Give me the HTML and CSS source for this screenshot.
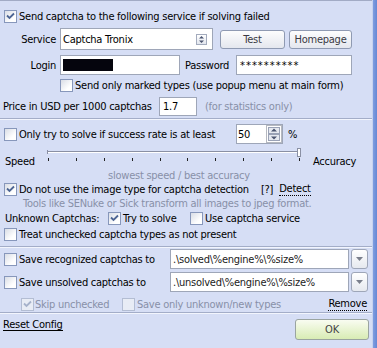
FILE: index.html
```html
<!DOCTYPE html>
<html lang="en">
<head>
  <meta charset="UTF-8" />
  <title>Captcha Settings</title>
  <link rel="stylesheet" href="styles.css">
</head>
<body>

<div class="window">
  <div class="panel">

    <div class="row r1">
      <span class="cb"><svg class="tick" viewBox="0 0 11 11"><path d="M2 4.5l2.5 2.5L9 2.5"/></svg></span>
      <span class="cap">Send captcha to the following service if solving failed</span>
    </div>

    <div class="row r2">
      <span class="lbl">Service</span>
      <div class="select">
        <span class="select-text">Captcha Tronix</span>
        <span class="select-btn">
          <svg width="7" height="9" viewBox="0 0 7 9"><path d="M3.5 1L6 3.5H1z M1 5.5h5L3.5 8z" fill="#4b5570"/></svg>
        </span>
      </div>
      <button class="btn btn-test">Test</button>
      <button class="btn btn-home">Homepage</button>
    </div>

    <div class="row r3">
      <span class="lbl">Login</span>
      <div class="field login"><span class="redacted"></span></div>
      <span class="lbl-pass">Password</span>
      <div class="field password">**********</div>
    </div>

    <div class="row r4">
      <span class="cb"></span>
      <span class="cap">Send only marked types (use popup menu at main form)</span>
    </div>

    <div class="row r5">
      <span class="price-lbl">Price in USD per 1000 captchas</span>
      <div class="field price">1.7</div>
      <span class="hint">(for statistics only)</span>
    </div>

    <div class="sep sep1"></div>

    <div class="row r6">
      <span class="cb"></span>
      <span class="cap rate-lbl">Only try to solve if success rate is at least</span>
      <div class="field spin">
        <span>50</span>
        <svg class="spin-btns" width="16" height="18" viewBox="0 0 16 18">
          <rect x="0.5" y="0.5" width="15" height="17" fill="none" stroke="#6b7080" stroke-dasharray="1 1"/>
          <rect x="2.5" y="2.5" width="11" height="6" fill="#e6e9f0" stroke="#9aa2b6"/>
          <rect x="2.5" y="9.5" width="11" height="6" fill="#e6e9f0" stroke="#9aa2b6"/>
          <path d="M8 3.5l3 3H5z M5 11.5h6l-3 3z" fill="#4b5570"/>
        </svg>
      </div>
      <span class="pct">%</span>
    </div>

    <div class="row r7">
      <span class="speed">Speed</span>
      <svg class="slider" width="254" height="20" viewBox="0 0 254 20">
        <rect x="0" y="4" width="252" height="1" fill="#8a90a4"/>
        <rect x="0" y="5" width="252" height="1" fill="#ffffff"/>
        <rect x="0" y="3" width="1" height="4" fill="#8a90a4"/>
        <g fill="#222">
          <rect x="1" y="11" width="1" height="3"/>
          <rect x="29" y="11" width="1" height="3"/>
          <rect x="57" y="11" width="1" height="3"/>
          <rect x="85" y="11" width="1" height="3"/>
          <rect x="113" y="11" width="1" height="3"/>
          <rect x="140" y="11" width="1" height="3"/>
          <rect x="168" y="11" width="1" height="3"/>
          <rect x="196" y="11" width="1" height="3"/>
          <rect x="224" y="11" width="1" height="3"/>
          <rect x="252" y="11" width="1" height="3"/>
        </g>
        <rect x="250.5" y="1.5" width="3" height="8" fill="#ffffff" stroke="#8a90a4"/>
      </svg>
      <span class="accuracy">Accuracy</span>
    </div>

    <div class="row r8">
      <span class="hint slider-hint">slowest speed / best accuracy</span>
    </div>

    <div class="row r9">
      <span class="cb"><svg class="tick" viewBox="0 0 11 11"><path d="M2 4.5l2.5 2.5L9 2.5"/></svg></span>
      <span class="cap detect-lbl">Do not use the image type for captcha detection</span>
      <span>[?]</span>
      <span class="link dotted detect">Detect</span>
    </div>

    <div class="row r10">
      <span class="hint">Tools like SENuke or Sick transform all images to jpeg format.</span>
    </div>

    <div class="row r11">
      <span class="unknown-lbl">Unknown Captchas:</span>
      <span class="cb"><svg class="tick" viewBox="0 0 11 11"><path d="M2 4.5l2.5 2.5L9 2.5"/></svg></span>
      <span class="cap try-lbl">Try to solve</span>
      <span class="cb"></span>
      <span class="cap">Use captcha service</span>
    </div>

    <div class="row r12">
      <span class="cb"></span>
      <span class="cap">Treat unchecked captcha types as not present</span>
    </div>

    <div class="sep sep2"></div>

    <div class="row r13">
      <span class="cb"></span>
      <span class="cap save-lbl">Save recognized captchas to</span>
      <div class="field combo">.\solved\%engine%\%size%</div>
      <span class="drop"><svg width="7" height="4" viewBox="0 0 7 4"><path d="M0 0h7L3.5 4z" fill="#7a7f8c"/></svg></span>
    </div>

    <div class="row r14">
      <span class="cb"></span>
      <span class="cap save-lbl">Save unsolved captchas to</span>
      <div class="field combo">.\unsolved\%engine%\%size%</div>
      <span class="drop"><svg width="7" height="4" viewBox="0 0 7 4"><path d="M0 0h7L3.5 4z" fill="#7a7f8c"/></svg></span>
    </div>

    <div class="row r15">
      <span class="cb disabled"><svg class="tick" viewBox="0 0 11 11"><path d="M2 4.5l2.5 2.5L9 2.5"/></svg></span>
      <span class="cap off skip-lbl">Skip unchecked</span>
      <span class="cb disabled"></span>
      <span class="cap off">Save only unknown/new types</span>
      <span class="link dotted remove">Remove</span>
    </div>

    <div class="sep sep3"></div>

    <div class="row bottom">
      <span class="link reset">Reset Config</span>
      <button class="btn ok">OK</button>
    </div>

  </div>
  <div class="frame"></div>
</div>

</body>
</html>
```

FILE: styles.css
```css
body {
  margin: 0;
  font-family: "DejaVu Sans Condensed", "DejaVu Sans", sans-serif;
  font-size: 11px;
  line-height: 13px;
  letter-spacing: -0.25px;
  color: #000;
  background: #d6def5;
}

.window {
  display: flex;
  width: 377px;
  height: 348px;
}

.panel {
  width: 372px;
  border-top: 1px solid #a2abc5;
}

.frame {
  width: 5px;
  background: linear-gradient(to right, #c6d2ef 0, #c6d2ef 1px, #7f9de0 1px, #6788d4 100%);
}

.row {
  display: flex;
  align-items: center;
  white-space: nowrap;
}

/* checkboxes */
.cb {
  flex: none;
  width: 13px;
  height: 13px;
  box-sizing: border-box;
  border: 1px solid #8797bb;
  background: linear-gradient(135deg, #d9dde6, #ffffff 70%);
  display: flex;
  align-items: center;
  justify-content: center;
}

.tick {
  width: 11px;
  height: 11px;
}

.tick path {
  fill: none;
  stroke: #4d6594;
  stroke-width: 1.8;
}

.cb.disabled {
  border-color: #b3bdd3;
  background: #e8ecf5;
}

.cb.disabled .tick path {
  stroke: #a6b2cb;
}

.cap {
  margin-left: 2px;
}

.off,
.hint {
  color: #8890a8;
}

/* fields */
.field {
  box-sizing: border-box;
  background: #fff;
  border: 1px solid #9ea6b8;
  display: flex;
  align-items: center;
  padding-left: 2px;
}

.btn {
  font-family: inherit;
  font-size: 11px;
  letter-spacing: -0.25px;
  color: #3a3a44;
  border: 1px solid #8f9ab2;
  border-radius: 3px;
  background: linear-gradient(#fdfdfd, #e4e7ee);
  padding: 0;
}

.link {
  color: #000;
}

.dotted {
  border-bottom: 1px dotted #000;
  line-height: 12px;
}

.sep {
  border-top: 1px solid #a3adc8;
  border-bottom: 1px solid #f2f5fd;
}

/* row 1 */
.r1 {
  margin-top: 7px;
  height: 16px;
  padding-left: 4px;
}

/* service row */
.r2 {
  margin-top: 4px;
  height: 22px;
}

.lbl {
  width: 56px;
  margin-right: 4px;
  text-align: right;
}

.select {
  box-sizing: border-box;
  width: 153px;
  height: 22px;
  background: #fff;
  border: 1px solid #9ea6b8;
  display: flex;
  align-items: center;
  justify-content: space-between;
  padding: 0 5px 0 2px;
}

.select-btn {
  width: 11px;
  height: 11px;
  box-sizing: border-box;
  border: 1px solid #a3abbd;
  background: linear-gradient(#ffffff, #e2e6ee);
  display: flex;
  align-items: center;
  justify-content: center;
}

.btn-test {
  margin-left: 7px;
  width: 65px;
  height: 19px;
}

.btn-home {
  margin-left: 4px;
  width: 63px;
  height: 19px;
}

/* login row */
.r3 {
  margin-top: 5px;
  height: 20px;
}

.login {
  width: 120px;
  height: 20px;
}

.redacted {
  width: 50px;
  height: 12px;
  background: #05050d;
}

.lbl-pass {
  margin-left: 5px;
  width: 51px;
}

.password {
  width: 116px;
  height: 20px;
  padding-left: 3px;
  letter-spacing: 1px;
}

.r4 {
  margin-top: 2px;
  height: 16px;
  padding-left: 60px;
}

/* price row */
.r5 {
  margin-top: 3px;
  height: 20px;
  padding-left: 3px;
}

.price-lbl {
  width: 156px;
}

.price {
  width: 38px;
  height: 19px;
  padding-left: 3px;
}

.r5 .hint {
  margin-left: 8px;
}

.sep1 {
  margin-top: 2px;
}

/* success rate row */
.r6 {
  margin-top: 4px;
  height: 20px;
  padding-left: 4px;
}

.rate-lbl {
  width: 217px;
}

.spin {
  width: 47px;
  height: 20px;
  justify-content: space-between;
  padding: 0 0 0 1px;
}

.pct {
  margin-left: 5px;
}

/* slider */
.r7 {
  margin-top: 3px;
  height: 20px;
  align-items: flex-start;
}

.speed {
  width: 47px;
  padding-left: 5px;
  box-sizing: border-box;
  margin-top: 8px;
}

.accuracy {
  margin-left: 12px;
  margin-top: 8px;
}

.r8 {
  margin-top: 1px;
  height: 14px;
}

.slider-hint {
  margin-left: 52px;
  width: 254px;
  text-align: center;
}

/* image type */
.r9 {
  height: 15px;
  padding-left: 4px;
}

.detect-lbl {
  width: 242px;
}

.detect {
  margin-left: 6px;
}

.r10 {
  height: 12px;
  padding-left: 23px;
}

.r11 {
  margin-top: 1px;
  height: 16px;
  padding-left: 5px;
}

.unknown-lbl {
  width: 103px;
}

.try-lbl {
  width: 67px;
}

.r12 {
  height: 16px;
  padding-left: 4px;
}

.sep2 {
  margin-top: 4px;
}

/* save paths */
.r13 {
  margin-top: 1px;
  height: 20px;
  padding-left: 4px;
}

.r14 {
  margin-top: 3px;
  height: 20px;
  padding-left: 4px;
}

.save-lbl {
  width: 151px;
}

.combo {
  width: 179px;
  height: 20px;
  color: #222;
}

.drop {
  margin-left: 2px;
  width: 17px;
  height: 20px;
  box-sizing: border-box;
  border: 1px solid #9ea6b8;
  border-radius: 3px;
  background: linear-gradient(#ffffff, #e6e9ef);
  display: flex;
  align-items: center;
  justify-content: center;
}

.r15 {
  margin-top: 4px;
  height: 16px;
  padding-left: 21px;
  padding-right: 5px;
}

.skip-lbl {
  width: 87px;
  margin-left: 1px;
}

.remove {
  margin-left: auto;
}

/* bottom */
.bottom {
  margin-top: 5px;
  align-items: flex-start;
  padding-left: 3px;
  padding-right: 3px;
}

.reset {
  line-height: 11px;
  border-bottom: 1px solid #000;
}

.ok {
  margin-left: auto;
  width: 74px;
  height: 21px;
  border-color: #9aa4a0;
  background: linear-gradient(#f9fcf1, #d8ecb4);
  color: #444;
}
```
